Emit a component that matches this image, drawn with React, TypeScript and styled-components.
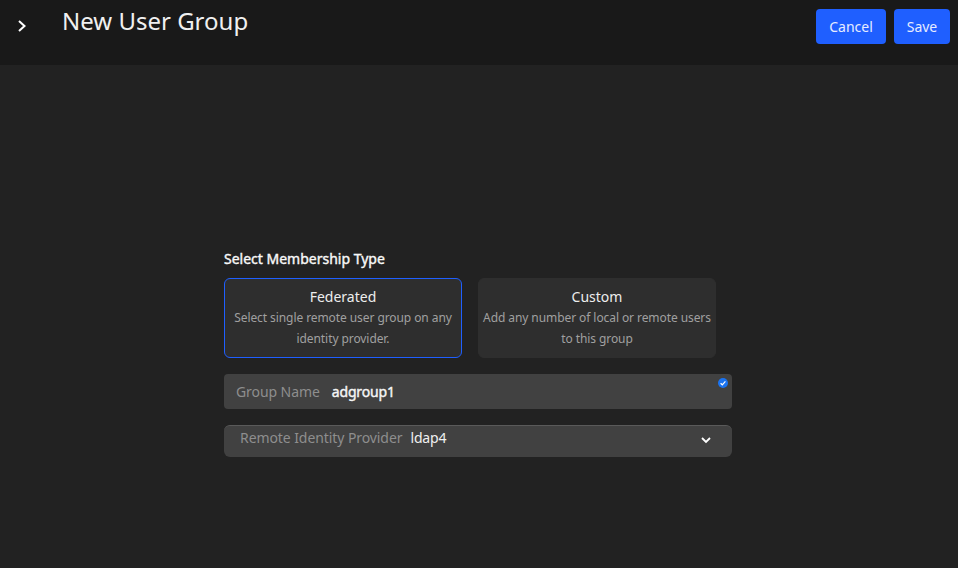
import styled, { createGlobalStyle } from 'styled-components';

const GlobalStyle = createGlobalStyle`
  html, body {
    margin: 0;
    height: 100%;
    background: #222222;
    font-family: "Noto Sans", "Open Sans", sans-serif;
  }
  #root { height: 100%; }
`;

const Page = styled.div`
  height: 568px;
  overflow: hidden;
  display: flex;
  flex-direction: column;
`;

const Header = styled.header`
  height: 65px;
  flex: none;
  box-sizing: border-box;
  background: #191919;
  display: flex;
  align-items: flex-start;
  padding: 9px 8px 0 16px;
`;

const BackIcon = styled.svg`
  width: 12px;
  height: 12px;
  margin: 11px 0 0 0;
  flex: none;
`;

const Title = styled.h1`
  margin: -4px 0 0 34px;
  font-size: 24px;
  line-height: 32px;
  font-weight: 400;
  color: #f0f0f0;
  flex: 1;
`;

const Actions = styled.div`
  display: flex;
  gap: 8px;
`;

const Button = styled.button<{ $width: number }>`
  width: ${p => p.$width}px;
  height: 35px;
  padding: 0;
  border: 0;
  border-radius: 4px;
  background: #1f5fff;
  color: #e6ecff;
  font: 400 14px/20px "Noto Sans", sans-serif;
`;

const Main = styled.main`
  width: 508px;
  margin: 184px 0 0 224px;
`;

const SectionLabel = styled.div`
  font-size: 14px;
  line-height: 20px;
  font-weight: 400;
  color: #f8f8f8;
  -webkit-text-stroke: 0.4px #f8f8f8;
  margin-bottom: 9px;
`;

const Cards = styled.div`
  display: flex;
  gap: 16px;
  margin-bottom: 16px;
`;

const Card = styled.div<{ $selected?: boolean }>`
  box-sizing: border-box;
  width: 238px;
  height: 80px;
  border-radius: 6px;
  border: 1px solid ${p => (p.$selected ? '#1f5fff' : '#2e2e2e')};
  background: #2e2e2e;
  text-align: center;
  padding: 8px 0 0;
`;

const CardTitle = styled.div`
  font-size: 14px;
  line-height: 20px;
  color: #ededed;
`;

const CardText = styled.div`
  font-size: 12px;
  line-height: 21px;
  color: #a0a0a0;
  letter-spacing: -0.08px;
  padding: 0 2px;
`;

const NameField = styled.div`
  position: relative;
  height: 35px;
  border-radius: 4px;
  background: #414141;
  display: flex;
  align-items: center;
  padding-left: 12px;
  margin-bottom: 16px;
`;

const FieldLabel = styled.span`
  font-size: 14px;
  color: #8e8e8e;
  letter-spacing: -0.08px;
`;

const NameValue = styled.span`
  margin-left: 12px;
  font-size: 14px;
  font-weight: 400;
  color: #f5f5f5;
  letter-spacing: -0.15px;
  -webkit-text-stroke: 0.4px #f5f5f5;
`;

const CheckBadge = styled.svg`
  position: absolute;
  top: 4px;
  right: 4px;
  width: 10px;
  height: 10px;
`;

const SelectField = styled.div`
  height: 32px;
  box-sizing: border-box;
  border-radius: 6px;
  background: #414141;
  border-top: 1px solid #5a5a5a;
  display: flex;
  align-items: flex-start;
  padding: 2px 20px 0 16px;
`;

const SelectValue = styled.span`
  margin-left: 8px;
  font-size: 14px;
  color: #f0f0f0;
  letter-spacing: -0.15px;
  flex: 1;
`;

const Chevron = styled.svg`
  width: 12px;
  height: 12px;
  margin-top: 6px;
`;

export default function App() {
  return (
    <Page>
      <GlobalStyle />
      <Header>
        <BackIcon viewBox="0 0 12 12" fill="none" stroke="#ffffff" strokeWidth="2">
          <path d="M3 1 8.5 6 3 11" />
        </BackIcon>
        <Title>New User Group</Title>
        <Actions>
          <Button $width={70}>Cancel</Button>
          <Button $width={56}>Save</Button>
        </Actions>
      </Header>
      <Main>
        <SectionLabel>Select Membership Type</SectionLabel>
        <Cards>
          <Card $selected>
            <CardTitle>Federated</CardTitle>
            <CardText>Select single remote user group on any identity provider.</CardText>
          </Card>
          <Card>
            <CardTitle>Custom</CardTitle>
            <CardText>Add any number of local or remote users to this group</CardText>
          </Card>
        </Cards>
        <NameField>
          <FieldLabel>Group Name</FieldLabel>
          <NameValue>adgroup1</NameValue>
          <CheckBadge viewBox="0 0 10 10">
            <circle cx="5" cy="5" r="5" fill="#1a73f0" />
            <path d="M2.6 5.2 4.3 6.8 7.4 3.4" fill="none" stroke="#fff" strokeWidth="1.2" />
          </CheckBadge>
        </NameField>
        <SelectField>
          <FieldLabel>Remote Identity Provider</FieldLabel>
          <SelectValue>ldap4</SelectValue>
          <Chevron viewBox="0 0 12 12" fill="none" stroke="#ffffff" strokeWidth="1.8">
            <path d="M2 4 6 8 10 4" />
          </Chevron>
        </SelectField>
      </Main>
    </Page>
  );
}
